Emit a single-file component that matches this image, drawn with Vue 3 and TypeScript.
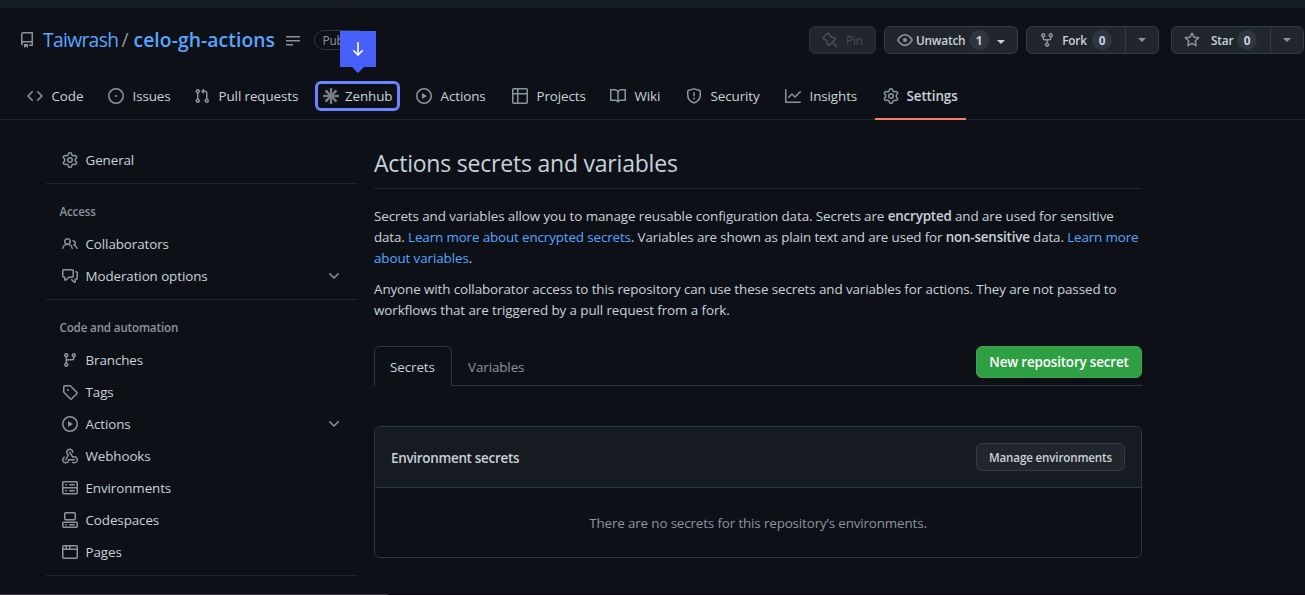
<script setup lang="ts">
interface NavItem { label: string; icon: string; kind?: 'zenhub' | 'active' }
interface SideItem { label: string; icon: string; expandable?: boolean }
interface SideGroup { title?: string; items: SideItem[] }

const icons: Record<string, string> = {
  repo: 'M2 2.5A2.5 2.5 0 0 1 4.5 0h8.75a.75.75 0 0 1 .75.75v12.5a.75.75 0 0 1-.75.75h-2.5a.75.75 0 0 1 0-1.5h1.75v-2h-8a1 1 0 0 0-.714 1.7.75.75 0 1 1-1.072 1.05A2.495 2.495 0 0 1 2 11.5Zm10.5-1h-8a1 1 0 0 0-1 1v6.708A2.486 2.486 0 0 1 4.5 9h8ZM5 12.25a.25.25 0 0 1 .25-.25h3.5a.25.25 0 0 1 .25.25v3.25a.25.25 0 0 1-.4.2l-1.45-1.087a.249.249 0 0 0-.3 0L5.4 15.7a.25.25 0 0 1-.4-.2Z',
  code: 'm11.28 3.22 4.25 4.25a.75.75 0 0 1 0 1.06l-4.25 4.25a.749.749 0 0 1-1.275-.326.749.749 0 0 1 .215-.734L13.94 8l-3.72-3.72a.749.749 0 0 1 .326-1.275.749.749 0 0 1 .734.215Zm-6.56 0a.751.751 0 0 1 1.042.018.751.751 0 0 1 .018 1.042L2.06 8l3.72 3.72a.749.749 0 0 1-.326 1.275.749.749 0 0 1-.734-.215L.47 8.53a.75.75 0 0 1 0-1.06Z',
  issue: 'M8 9.1a1.1 1.1 0 1 0 0-2.2 1.1 1.1 0 0 0 0 2.2ZM8 0a8 8 0 1 1 0 16A8 8 0 0 1 8 0ZM1.5 8a6.5 6.5 0 1 0 13 0 6.5 6.5 0 0 0-13 0Z',
  pull: 'M1.5 3.25a2.25 2.25 0 1 1 3 2.122v5.256a2.251 2.251 0 1 1-1.5 0V5.372A2.25 2.25 0 0 1 1.5 3.25Zm5.677-.177L9.573.677A.25.25 0 0 1 10 .854V2.5h1A2.5 2.5 0 0 1 13.5 5v5.628a2.251 2.251 0 1 1-1.5 0V5a1 1 0 0 0-1-1h-1v1.646a.25.25 0 0 1-.427.177L7.177 3.427a.25.25 0 0 1 0-.354ZM3.75 2.5a.75.75 0 1 0 0 1.5.75.75 0 0 0 0-1.5Zm0 9.5a.75.75 0 1 0 0 1.5.75.75 0 0 0 0-1.5Zm8.25.75a.75.75 0 1 0 1.5 0 .75.75 0 0 0-1.5 0Z',
  zenhub: 'M6.700.2h2.600L8.900 5.600l3.600-4 1.900 1.900-4 3.600 5.400-.4v2.600l-5.400-.4 4 3.600-1.900 1.900-3.600-4 .4 5.400H6.700l.4-5.400-3.600 4-1.900-1.900 4-3.600-5.400.4V6.700l5.400.4-4-3.600 1.900-1.900 3.600 4Z',
  play: 'M8 0a8 8 0 1 1 0 16A8 8 0 0 1 8 0ZM1.5 8a6.5 6.5 0 1 0 13 0 6.5 6.5 0 0 0-13 0Zm4.879-2.773 4.264 2.559a.25.25 0 0 1 0 .428l-4.264 2.559A.25.25 0 0 1 6 10.559V5.442a.25.25 0 0 1 .379-.215Z',
  table: 'M0 1.75C0 .784.784 0 1.75 0h12.5C15.216 0 16 .784 16 1.75v12.5A1.75 1.75 0 0 1 14.25 16H1.75A1.75 1.75 0 0 1 0 14.25ZM6.5 6.5v8h7.75a.25.25 0 0 0 .25-.25V6.5Zm8-1.5V1.75a.25.25 0 0 0-.25-.25H6.5V5Zm-13 1.5v7.75c0 .138.112.25.25.25H5v-8ZM5 5V1.500H1.750a.25.25 0 0 0-.25.25V5Z',
  book: 'M0 1.75A.75.75 0 0 1 .75 1h4.253c1.227 0 2.317.59 3 1.501A3.743 3.743 0 0 1 11.006 1h4.245a.75.75 0 0 1 .75.75v10.5a.75.75 0 0 1-.75.75h-4.507a2.25 2.25 0 0 0-1.591.659l-.622.621a.75.75 0 0 1-1.06 0l-.622-.621A2.25 2.25 0 0 0 5.258 13H.75a.75.75 0 0 1-.75-.75Zm7.251 10.324.004-5.073-.002-2.253A2.25 2.25 0 0 0 5.003 2.5H1.5v9h3.757a3.75 3.75 0 0 1 1.994.574ZM8.755 4.75l-.004 7.322a3.752 3.752 0 0 1 1.992-.572H14.5v-9h-3.495a2.25 2.25 0 0 0-2.25 2.25Z',
  shield: 'M7.467.133a1.748 1.748 0 0 1 1.066 0l5.25 1.68A1.75 1.75 0 0 1 15 3.48V7c0 1.566-.32 3.182-1.303 4.682-.983 1.498-2.585 2.813-5.032 3.855a1.697 1.697 0 0 1-1.33 0c-2.447-1.042-4.049-2.357-5.032-3.855C1.32 10.182 1 8.566 1 7V3.48a1.75 1.75 0 0 1 1.217-1.667Zm.61 1.429a.25.25 0 0 0-.153 0l-5.25 1.68a.25.25 0 0 0-.174.238V7c0 1.358.275 2.666 1.057 3.86.784 1.194 2.121 2.34 4.366 3.297a.196.196 0 0 0 .154 0c2.245-.956 3.582-2.104 4.366-3.298C13.225 9.666 13.5 8.36 13.5 7V3.48a.251.251 0 0 0-.174-.237l-5.25-1.68ZM8.75 4.75v3a.75.75 0 0 1-1.5 0v-3a.75.75 0 0 1 1.5 0ZM9 10.5a1 1 0 1 1-2 0 1 1 0 0 1 2 0Z',
  graph: 'M1.5 1.75V13.5h13.75a.75.75 0 0 1 0 1.5H.75a.75.75 0 0 1-.75-.75V1.75a.75.75 0 0 1 1.5 0Zm14.28 2.53-5.25 5.25a.75.75 0 0 1-1.06 0L7 7.06 4.28 9.78a.751.751 0 0 1-1.042-.018.751.751 0 0 1-.018-1.042l3.25-3.25a.75.75 0 0 1 1.06 0L10 7.94l4.72-4.72a.751.751 0 0 1 1.042.018.751.751 0 0 1 .018 1.042Z',
  gear: 'M8 0a8.2 8.2 0 0 1 .701.031C9.444.095 9.99.645 10.16 1.29l.288 1.107c.018.066.079.158.212.224.231.114.454.243.668.386.123.082.233.09.299.071l1.103-.303c.644-.176 1.392.021 1.82.63.27.385.506.792.704 1.218.315.675.111 1.422-.364 1.891l-.814.806c-.049.048-.098.147-.088.294.016.257.016.515 0 .772-.01.147.038.246.088.294l.814.806c.475.469.679 1.216.364 1.891a7.977 7.977 0 0 1-.704 1.217c-.428.61-1.176.807-1.82.63l-1.102-.302c-.067-.019-.177-.011-.3.071a5.909 5.909 0 0 1-.668.386c-.133.066-.194.158-.211.224l-.29 1.106c-.168.646-.715 1.196-1.458 1.26a8.006 8.006 0 0 1-1.402 0c-.743-.064-1.289-.614-1.458-1.26l-.289-1.106c-.018-.066-.079-.158-.212-.224a5.738 5.738 0 0 1-.668-.386c-.123-.082-.233-.09-.299-.071l-1.103.303c-.644.176-1.392-.021-1.82-.63a8.12 8.12 0 0 1-.704-1.218c-.315-.675-.111-1.422.363-1.891l.815-.806c.05-.048.098-.147.088-.294a6.214 6.214 0 0 1 0-.772c.01-.147-.038-.246-.088-.294l-.815-.806C.635 6.045.431 5.298.746 4.623a7.92 7.92 0 0 1 .704-1.217c.428-.61 1.176-.807 1.82-.63l1.102.302c.067.019.177.011.3-.071.214-.143.437-.272.668-.386.133-.066.194-.158.211-.224l.29-1.106C6.009.645 6.556.095 7.299.03 7.53.01 7.764 0 8 0Zm-.571 1.525c-.036.003-.108.036-.137.146l-.289 1.105c-.147.561-.549.967-.998 1.189-.173.086-.34.183-.5.29-.417.278-.97.423-1.529.27l-1.103-.303c-.109-.03-.175.016-.195.045-.22.312-.412.644-.573.99-.014.031-.021.11.059.19l.815.806c.411.406.562.957.53 1.456a4.709 4.709 0 0 0 0 .582c.032.499-.119 1.05-.53 1.456l-.815.806c-.081.08-.073.159-.059.19.162.346.353.677.573.989.02.03.085.076.195.046l1.102-.303c.56-.153 1.113-.008 1.53.27.161.107.328.204.501.29.447.222.85.629.997 1.189l.289 1.105c.029.109.101.143.137.146a6.6 6.6 0 0 0 1.142 0c.036-.003.108-.036.137-.146l.289-1.105c.147-.561.549-.967.998-1.189.173-.086.34-.183.5-.29.417-.278.97-.423 1.529-.27l1.103.303c.109.029.175-.016.195-.045.22-.313.411-.644.573-.99.014-.031.021-.11-.059-.19l-.815-.806c-.411-.406-.562-.957-.53-1.456a4.709 4.709 0 0 0 0-.582c-.032-.499.119-1.05.53-1.456l.815-.806c.081-.08.073-.159.059-.19a6.464 6.464 0 0 0-.573-.989c-.02-.03-.085-.076-.195-.046l-1.102.303c-.56.153-1.113.008-1.53-.27a4.44 4.44 0 0 0-.501-.29c-.447-.222-.85-.629-.997-1.189l-.289-1.105c-.029-.11-.101-.143-.137-.146a6.6 6.6 0 0 0-1.142 0ZM11 8a3 3 0 1 1-6 0 3 3 0 0 1 6 0ZM9.5 8a1.5 1.5 0 1 0-3.001.001A1.5 1.5 0 0 0 9.5 8Z',
  people: 'M2 5.5a3.5 3.5 0 1 1 5.898 2.549 5.508 5.508 0 0 1 3.034 4.084.75.75 0 1 1-1.482.235 4 4 0 0 0-7.9 0 .75.75 0 0 1-1.482-.236A5.507 5.507 0 0 1 3.102 8.05 3.493 3.493 0 0 1 2 5.5ZM11 4a3.001 3.001 0 0 1 2.22 5.018 5.01 5.01 0 0 1 2.56 3.012.749.749 0 0 1-.885.954.752.752 0 0 1-.549-.514 3.507 3.507 0 0 0-2.522-2.372.75.75 0 0 1-.574-.73v-.352a.75.75 0 0 1 .416-.672A1.5 1.5 0 0 0 11 5.5.75.75 0 0 1 11 4Zm-5.500-.5a2 2 0 1 0-.001 3.999A2 2 0 0 0 5.500 3.500Z',
  discussion: 'M1.75 1h8.500c.966 0 1.750.784 1.750 1.750v5.500A1.750 1.750 0 0 1 10.250 10H7.061l-2.574 2.573A1.458 1.458 0 0 1 2 11.543V10h-.25A1.750 1.750 0 0 1 0 8.250v-5.500C0 1.784.784 1 1.750 1ZM1.500 2.750v5.500c0 .138.112.25.25.25h1a.75.75 0 0 1 .75.75v2.190l2.720-2.720a.749.749 0 0 1 .53-.22h3.500a.25.25 0 0 0 .25-.25v-5.500a.25.25 0 0 0-.25-.25h-8.500a.25.25 0 0 0-.25.25Zm13 2a.25.25 0 0 0-.25-.25h-.5a.75.75 0 0 1 0-1.500h.5c.966 0 1.750.784 1.750 1.750v5.500A1.750 1.750 0 0 1 14.250 12H14v1.543a1.458 1.458 0 0 1-2.487 1.030L9.220 12.280a.749.749 0 0 1 .326-1.275.749.749 0 0 1 .734.215l2.220 2.220v-2.190a.75.75 0 0 1 .75-.75h1a.25.25 0 0 0 .25-.25Z',
  branch: 'M9.5 3.25a2.25 2.25 0 1 1 3 2.122V6A2.5 2.5 0 0 1 10 8.5H6a1 1 0 0 0-1 1v1.128a2.251 2.251 0 1 1-1.5 0V5.372a2.25 2.25 0 1 1 1.5 0v1.836A2.493 2.493 0 0 1 6 7h4a1 1 0 0 0 1-1v-.628A2.25 2.25 0 0 1 9.5 3.25Zm-6 0a.75.75 0 1 0 1.5 0 .75.75 0 0 0-1.5 0Zm8.25-.75a.75.75 0 1 0 0 1.5.75.75 0 0 0 0-1.5ZM4.25 12a.75.75 0 1 0 0 1.5.75.75 0 0 0 0-1.5Z',
  tag: 'M1 7.775V2.75C1 1.784 1.784 1 2.75 1h5.025c.464 0 .91.184 1.238.513l6.25 6.25a1.75 1.75 0 0 1 0 2.474l-5.026 5.026a1.75 1.75 0 0 1-2.474 0l-6.25-6.25A1.752 1.752 0 0 1 1 7.775Zm1.5 0c0 .066.026.13.073.177l6.25 6.25a.25.25 0 0 0 .354 0l5.025-5.025a.25.25 0 0 0 0-.354l-6.25-6.25a.25.25 0 0 0-.177-.073H2.75a.25.25 0 0 0-.25.25ZM6 5a1 1 0 1 1 0 2 1 1 0 0 1 0-2Z',
  webhook: 'M5.500 4.250a2.250 2.250 0 0 1 4.500 0 .75.75 0 0 0 1.500 0 3.750 3.750 0 1 0-6.140 2.889l-2.272 4.258a.75.75 0 0 0 1.324.706L7 7.250a.75.75 0 0 0-.309-1.015A2.250 2.250 0 0 1 5.500 4.250ZM7.364 3.607a.75.75 0 0 1 1.030.257l2.608 4.349a3.750 3.750 0 1 1-.628 6.785.75.75 0 0 1 .752-1.299 2.250 2.250 0 1 0-.033-3.880.75.75 0 0 1-1.030-.256L7.107 4.636a.75.75 0 0 1 .257-1.030ZM2.900 8.776A.75.75 0 0 1 2.625 9.800 2.250 2.250 0 1 0 6 11.750a.75.75 0 0 1 .75-.751h5.500a.75.75 0 0 1 0 1.500H7.425a3.751 3.751 0 1 1-5.550-3.998.75.75 0 0 1 1.024.274Z',
  server: 'M1.75 1h12.500c.966 0 1.750.784 1.750 1.750v4c0 .372-.116.717-.314 1 .198.283.314.628.314 1v4a1.750 1.750 0 0 1-1.750 1.750H1.750A1.750 1.750 0 0 1 0 12.750v-4c0-.358.109-.707.314-1a1.739 1.739 0 0 1-.314-1v-4C0 1.784.784 1 1.750 1ZM1.500 2.750v4c0 .138.112.25.25.25h12.500a.25.25 0 0 0 .25-.25v-4a.25.25 0 0 0-.25-.25H1.750a.25.25 0 0 0-.25.25Zm.25 5.750a.25.25 0 0 0-.25.25v4c0 .138.112.25.25.25h12.500a.25.25 0 0 0 .25-.25v-4a.25.25 0 0 0-.25-.25ZM7 4.750A.75.75 0 0 1 7.750 4h4.500a.75.75 0 0 1 0 1.500h-4.500A.75.75 0 0 1 7 4.750ZM7.750 10h4.500a.75.75 0 0 1 0 1.500h-4.500a.75.75 0 0 1 0-1.500ZM3 4.750A.75.75 0 0 1 3.750 4h.5a.75.75 0 0 1 0 1.500h-.5A.75.75 0 0 1 3 4.750ZM3.750 10h.5a.75.75 0 0 1 0 1.500h-.5a.75.75 0 0 1 0-1.500Z',
  codespaces: 'M0 11.250c0-.966.784-1.750 1.750-1.750h12.500c.966 0 1.750.784 1.750 1.750v3A1.750 1.750 0 0 1 14.250 16H1.750A1.750 1.750 0 0 1 0 14.250Zm2-9.500C2 .784 2.784 0 3.750 0h8.500C13.216 0 14 .784 14 1.750v5a1.750 1.750 0 0 1-1.750 1.750h-8.500A1.750 1.750 0 0 1 2 6.750Zm1.750-.25a.25.25 0 0 0-.25.25v5c0 .138.112.25.25.25h8.500a.25.25 0 0 0 .25-.25v-5a.25.25 0 0 0-.25-.25Zm-2 9.500a.25.25 0 0 0-.25.25v3c0 .138.112.25.25.25h12.500a.25.25 0 0 0 .25-.25v-3a.25.25 0 0 0-.25-.25ZM7 12.750a.75.75 0 0 1 .75-.75h4.500a.75.75 0 0 1 0 1.500h-4.500a.75.75 0 0 1-.75-.75Zm-4 0a.75.75 0 0 1 .75-.75h.5a.75.75 0 0 1 0 1.500h-.5a.75.75 0 0 1-.75-.75Z',
  browser: 'M0 2.750C0 1.784.784 1 1.750 1h12.500c.966 0 1.750.784 1.750 1.750v10.500A1.750 1.750 0 0 1 14.250 15H1.750A1.750 1.750 0 0 1 0 13.250ZM14.500 6h-13v7.250c0 .138.112.25.25.25h12.500a.25.25 0 0 0 .25-.25Zm-6-3.500v2h6V2.750a.25.25 0 0 0-.25-.25ZM5 2.500v2h2v-2Zm-3.250 0a.25.25 0 0 0-.25.25V4.500h2v-2Z',
  chevron: 'M12.780 5.220a.749.749 0 0 1 0 1.060l-4.250 4.250a.749.749 0 0 1-1.060 0L3.220 6.280a.749.749 0 1 1 1.060-1.060L8 8.939l3.720-3.719a.749.749 0 0 1 1.060 0Z',
  pin: 'm11.294.984 3.722 3.722a1.750 1.750 0 0 1-.504 2.826l-1.327.613a3.089 3.089 0 0 0-1.707 2.084l-.584 2.454c-.317 1.332-1.972 1.800-2.940.832L5.750 11.311 1.780 15.280a.749.749 0 1 1-1.060-1.060l3.969-3.970-2.204-2.204c-.968-.968-.5-2.623.832-2.940l2.454-.584a3.080 3.080 0 0 0 2.084-1.707l.613-1.327a1.750 1.750 0 0 1 2.826-.504ZM6.283 9.723l2.732 2.731a.25.25 0 0 0 .42-.119l.584-2.454a4.586 4.586 0 0 1 2.537-3.098l1.328-.613a.25.25 0 0 0 .072-.404l-3.722-3.722a.25.25 0 0 0-.404.072l-.613 1.328a4.584 4.584 0 0 1-3.098 2.537l-2.454.584a.25.25 0 0 0-.119.420Z',
  eye: 'M8 2c1.981 0 3.671.992 4.933 2.078 1.270 1.091 2.187 2.345 2.637 3.023a1.620 1.620 0 0 1 0 1.798c-.450.678-1.367 1.932-2.637 3.023C11.670 13.008 9.981 14 8 14c-1.981 0-3.671-.992-4.933-2.078C1.797 10.830.880 9.576.430 8.898a1.620 1.620 0 0 1 0-1.798c.450-.677 1.367-1.931 2.637-3.022C4.330 2.992 6.019 2 8 2ZM1.679 7.932a.120.120 0 0 0 0 .136c.411.622 1.241 1.750 2.366 2.717C5.176 11.758 6.527 12.500 8 12.500c1.473 0 2.825-.742 3.955-1.715 1.124-.967 1.954-2.096 2.366-2.717a.120.120 0 0 0 0-.136c-.412-.621-1.242-1.750-2.366-2.717C10.824 4.242 9.473 3.500 8 3.500c-1.473 0-2.824.742-3.955 1.715-1.124.967-1.954 2.096-2.366 2.717ZM8 10a2 2 0 1 1-.001-3.999A2 2 0 0 1 8 10Z',
  fork: 'M5 5.372v.878c0 .414.336.75.75.75h4.500a.75.75 0 0 0 .75-.75v-.878a2.250 2.250 0 1 1 1.500 0v.878a2.250 2.250 0 0 1-2.250 2.250h-1.500v2.128a2.251 2.251 0 1 1-1.500 0V8.500h-1.500A2.250 2.250 0 0 1 3.500 6.250v-.878a2.250 2.250 0 1 1 1.500 0ZM5 3.250a.75.75 0 1 0-1.500 0 .75.75 0 0 0 1.500 0Zm6.750.75a.75.75 0 1 0 0-1.500.75.75 0 0 0 0 1.500Zm-3 8.750a.75.75 0 1 0-1.500 0 .75.75 0 0 0 1.500 0Z',
  star: 'M8 .25a.75.75 0 0 1 .673.418l1.882 3.815 4.210.612a.75.75 0 0 1 .416 1.279l-3.046 2.970.719 4.192a.751.751 0 0 1-1.088.791L8 12.347l-3.766 1.980a.75.75 0 0 1-1.088-.790l.720-4.194L.818 6.374a.75.75 0 0 1 .416-1.280l4.210-.611L7.327.668A.75.75 0 0 1 8 .25Zm0 2.445L6.615 5.500a.75.75 0 0 1-.564.410l-3.097.450 2.240 2.184a.75.75 0 0 1 .216.664l-.528 3.084 2.769-1.456a.75.75 0 0 1 .698 0l2.770 1.456-.530-3.084a.75.75 0 0 1 .216-.664l2.240-2.183-3.096-.450a.75.75 0 0 1-.564-.410Z',
}

const nav: NavItem[] = [
  { label: 'Code', icon: 'code' },
  { label: 'Issues', icon: 'issue' },
  { label: 'Pull requests', icon: 'pull' },
  { label: 'Zenhub', icon: 'zenhub', kind: 'zenhub' },
  { label: 'Actions', icon: 'play' },
  { label: 'Projects', icon: 'table' },
  { label: 'Wiki', icon: 'book' },
  { label: 'Security', icon: 'shield' },
  { label: 'Insights', icon: 'graph' },
  { label: 'Settings', icon: 'gear', kind: 'active' },
]

const groups: SideGroup[] = [
  { items: [{ label: 'General', icon: 'gear' }] },
  {
    title: 'Access',
    items: [
      { label: 'Collaborators', icon: 'people' },
      { label: 'Moderation options', icon: 'discussion', expandable: true },
    ],
  },
  {
    title: 'Code and automation',
    items: [
      { label: 'Branches', icon: 'branch' },
      { label: 'Tags', icon: 'tag' },
      { label: 'Actions', icon: 'play', expandable: true },
      { label: 'Webhooks', icon: 'webhook' },
      { label: 'Environments', icon: 'server' },
      { label: 'Codespaces', icon: 'codespaces' },
      { label: 'Pages', icon: 'browser' },
    ],
  },
]
</script>

<template>
  <div class="page">
    <div class="strip"></div>
    <header class="repo-head">
      <svg class="icon repo-icon" viewBox="0 0 16 16"><path :d="icons.repo" /></svg>
      <a class="owner">Taiwrash</a>
      <span class="slash">/</span>
      <a class="name">celo-gh-actions</a>
      <svg class="lines" viewBox="0 0 14 10"><path d="M0 0h14v1.500H0ZM0 4h14v1.500H0ZM0 8h7v1.500H0Z" /></svg>
      <span class="pill">Public</span>
      <div class="buttons">
        <button class="btn pin"><svg class="icon flip" viewBox="0 0 16 16"><path :d="icons.pin" /></svg><span>Pin</span></button>
        <button class="btn watch"><svg class="icon" viewBox="0 0 16 16"><path :d="icons.eye" /></svg><span>Unwatch</span><b class="count">1</b><i class="caret light"></i></button>
        <div class="btn split fork">
          <button class="half"><svg class="icon" viewBox="0 0 16 16"><path :d="icons.fork" /></svg><span>Fork</span><b class="count">0</b></button>
          <button class="more"><i class="caret"></i></button>
        </div>
        <div class="btn split star">
          <button class="half"><svg class="icon" viewBox="0 0 16 16"><path :d="icons.star" /></svg><span>Star</span><b class="count">0</b></button>
          <button class="more"><i class="caret"></i></button>
        </div>
      </div>
    </header>

    <nav class="tabs">
      <a v-for="item in nav" :key="item.label" class="tab" :class="item.kind">
        <svg class="icon" viewBox="0 0 16 16"><path :d="icons[item.icon]" /></svg>
        <span>{{ item.label }}</span>
        <span v-if="item.kind === 'zenhub'" class="pointer">
          <svg viewBox="0 0 36 42"><path class="flag" d="M0 0h36v36H24l-6 6-6-6H0Z" /><path class="arrow" d="M18 11v13M13.300 19.300 18 24l4.700-4.700" /></svg>
        </span>
      </a>
    </nav>

    <div class="body">
      <aside class="side">
        <section v-for="(group, i) in groups" :key="i" class="group">
          <h2 v-if="group.title">{{ group.title }}</h2>
          <a v-for="item in group.items" :key="item.label" class="row">
            <svg class="icon" viewBox="0 0 16 16"><path :d="icons[item.icon]" /></svg>
            <span>{{ item.label }}</span>
            <svg v-if="item.expandable" class="icon chev" viewBox="0 0 16 16"><path :d="icons.chevron" /></svg>
          </a>
        </section>
      </aside>

      <main class="main">
        <h1>Actions secrets and variables</h1>
        <p class="intro">
          <span class="l1">Secrets and variables allow you to manage reusable configuration data. Secrets are <strong>encrypted</strong> and are used for sensitive</span><br />
          <span class="l2">data. <a>Learn more about encrypted secrets</a>. Variables are shown as plain text and are used for <strong>non-sensitive</strong> data. <a>Learn more</a></span><br />
          <span class="l3"><a>about variables</a>.</span>
        </p>
        <p class="note">
          <span class="l4">Anyone with collaborator access to this repository can use these secrets and variables for actions. They are not passed to</span><br />
          <span class="l5">workflows that are triggered by a pull request from a fork.</span>
        </p>
        <div class="subnav">
          <a class="sub on">Secrets</a>
          <a class="sub">Variables</a>
          <button class="new">New repository secret</button>
        </div>
        <section class="card">
          <div class="card-head">
            <h3>Environment secrets</h3>
            <button class="btn manage">Manage environments</button>
          </div>
          <div class="empty"><span>There are no secrets for this repository’s environments.</span></div>
        </section>
      </main>
    </div>
    <div class="status-edge"></div>
  </div>
</template>

<style>
html, body { margin: 0; background: #0d1117; overflow: hidden; }
</style>

<style scoped>
.page { position: relative; width: 1305px; height: 595px; overflow: hidden; background: #0d1117; color: #c9d1d9; font-family: "Open Sans", "Noto Sans", sans-serif; font-size: 13.4px; letter-spacing: -0.09px; line-height: 21px; white-space: nowrap; }
.page * { box-sizing: border-box; }
button { font: inherit; letter-spacing: inherit; color: inherit; background: none; border: 0; margin: 0; padding: 0; }
a { color: #58a6ff; text-decoration: none; }
.icon { width: 16px; height: 16px; fill: #8b949e; flex: none; display: block; }
.strip { height: 8px; background: #161b22; }

.repo-head { height: 64px; display: flex; align-items: center; padding-left: 19px; font-size: 19.3px; line-height: 30px; }
.repo-icon { margin-right: 8px; }
.owner { width: 75px; letter-spacing: -0.68px; }
.slash { width: 15.5px; padding-left: 3.5px; color: #8b949e; }
.name { width: 141px; font-weight: 600; letter-spacing: 0.08px; }
.lines { width: 14px; height: 10px; fill: #8b949e; margin: 2px 14px 0 11.500px; }
.pill { height: 20px; width: 54px; border: 1px solid #30363d; border-radius: 10px; color: #8b949e; font-size: 12px; font-weight: 500; letter-spacing: -0.3px; line-height: 19px; padding-left: 7.5px; }
.buttons { display: flex; margin-left: auto; margin-right: 1px; font-size: 11.800px; letter-spacing: -0.2px; font-weight: 600; }
.btn { height: 28px; border: 1px solid #363b42; border-radius: 6px; background: #21262d; display: flex; align-items: center; line-height: 20px; }
.pin { width: 67px; padding-left: 12px; gap: 8px; margin-right: 8px; color: #484f58; font-weight: 500; border-color: #2b3037; }
.pin .icon { fill: #484f58; }
.flip { transform: scaleX(-1); }
.watch { width: 134px; padding-left: 12px; gap: 3px; margin-right: 8px; }
.watch span { width: 49px; }
.count { height: 20px; width: 20px; border-radius: 10px; background: #30363d; text-align: center; font-weight: 700; letter-spacing: 0; }
.watch .count { margin-left: 1px; }
.caret { width: 0; height: 0; border: 4px solid transparent; border-bottom: 0; border-top-color: #8b949e; }
.caret.light { border-top-color: #c9d1d9; margin: 3px 0 0 5px; }
.fork { width: 133px; margin-right: 12px; }
.star { width: 133px; }
.half { flex: 1; height: 100%; display: flex; align-items: center; padding-left: 12px; gap: 7px; }
.half span { width: 25px; margin-right: -2px; }
.star .half span { width: 22px; margin-left: 4px; margin-right: -3px; }
.more { width: 33px; height: 100%; border-left: 1px solid #363b42; display: grid; place-items: center; }

.tabs { height: 48px; border-bottom: 1px solid #21262d; padding-left: 19px; display: grid; grid-template-columns: 81px 86px 129px 93px 96px 98px 76px 99px 98px 91px; align-items: start; }
.tab { position: relative; height: 48px; display: flex; align-items: center; padding-left: 8px; gap: 8.5px; color: #c9d1d9; }
.tab.active { font-weight: 600; border-bottom: 2px solid #f78166; padding-top: 2px; gap: 7.5px; }
.tab.zenhub { height: 30px; width: 85px; margin: 9px 0 0; padding-left: 5px; gap: 6px; border: 3px solid #6c84ff; border-radius: 6px; }
.zenhub > .icon { fill: #7b8189; }
.pointer { position: absolute; left: 22px; top: -53px; width: 36px; height: 42px; }
.pointer svg { display: block; width: 36px; height: 42px; }
.flag { fill: #4660f9; }
.arrow { fill: none; stroke: #fff; stroke-width: 1.600; }

.body { display: flex; padding-left: 46px; gap: 16px; }
.side { width: 312px; padding-top: 24px; }
.group { border-bottom: 1px solid #21262d; padding-bottom: 7px; margin-bottom: 8px; }
.group h2 { margin: 0; height: 36px; padding: 9px 0 0 13.5px; font-size: 11.600px; letter-spacing: -0.15px; line-height: 21px; font-weight: 600; color: #8b949e; }
.row { height: 32px; display: flex; align-items: center; padding: 0 16px; gap: 7.5px; color: #c9d1d9; }
.chev { margin-left: auto; }

.main { width: 768px; }
h1 { margin: 0; height: 69px; padding-top: 25px; border-bottom: 1px solid #21262d; font-size: 23px; letter-spacing: -0.21px; line-height: 36px; font-weight: 400; }
p { margin: 0; }
strong { font-weight: 600; letter-spacing: -0.18px; }
.intro { margin-top: 17px; }
.l1 { letter-spacing: -0.08px; }
.l2 { letter-spacing: -0.13px; }
.note { margin-top: 10px; }
.subnav { margin-top: 25px; height: 40px; display: flex; align-items: flex-start; border-bottom: 1px solid #30363d; }
.sub { height: 40px; padding: 11px 16px 0; color: #8b949e; }
.sub.on { width: 78px; border: 1px solid #30363d; border-bottom: 0; border-radius: 6px 6px 0 0; background: #0d1117; color: #c9d1d9; padding: 10px 15px 0; }
.new { margin-left: auto; width: 166px; height: 32px; padding-top: 1px; border: 1px solid #3fa650; border-radius: 6px; background: #2ea043; color: #fff; font-weight: 600; letter-spacing: -0.15px; }
.card { margin-top: 40px; height: 132px; border: 1px solid #30363d; border-radius: 6px; overflow: hidden; }
.card-head { height: 61px; background: #161b22; border-bottom: 1px solid #30363d; display: flex; align-items: center; justify-content: space-between; padding: 0 16px; }
h3 { margin: 0; padding-top: 3px; font-size: 13.400px; letter-spacing: -0.27px; font-weight: 600; }
.manage { width: 149px; padding-top: 1px; justify-content: center; font-size: 11.600px; letter-spacing: -0.15px; font-weight: 600; }
.empty { height: 70px; display: grid; place-items: center; color: #8b949e; letter-spacing: -0.14px; }
.status-edge { position: absolute; left: 0; right: 0; bottom: 0; height: 1px; border-left: 388px solid #3c3a3a; background: #0a0310; }
</style>
